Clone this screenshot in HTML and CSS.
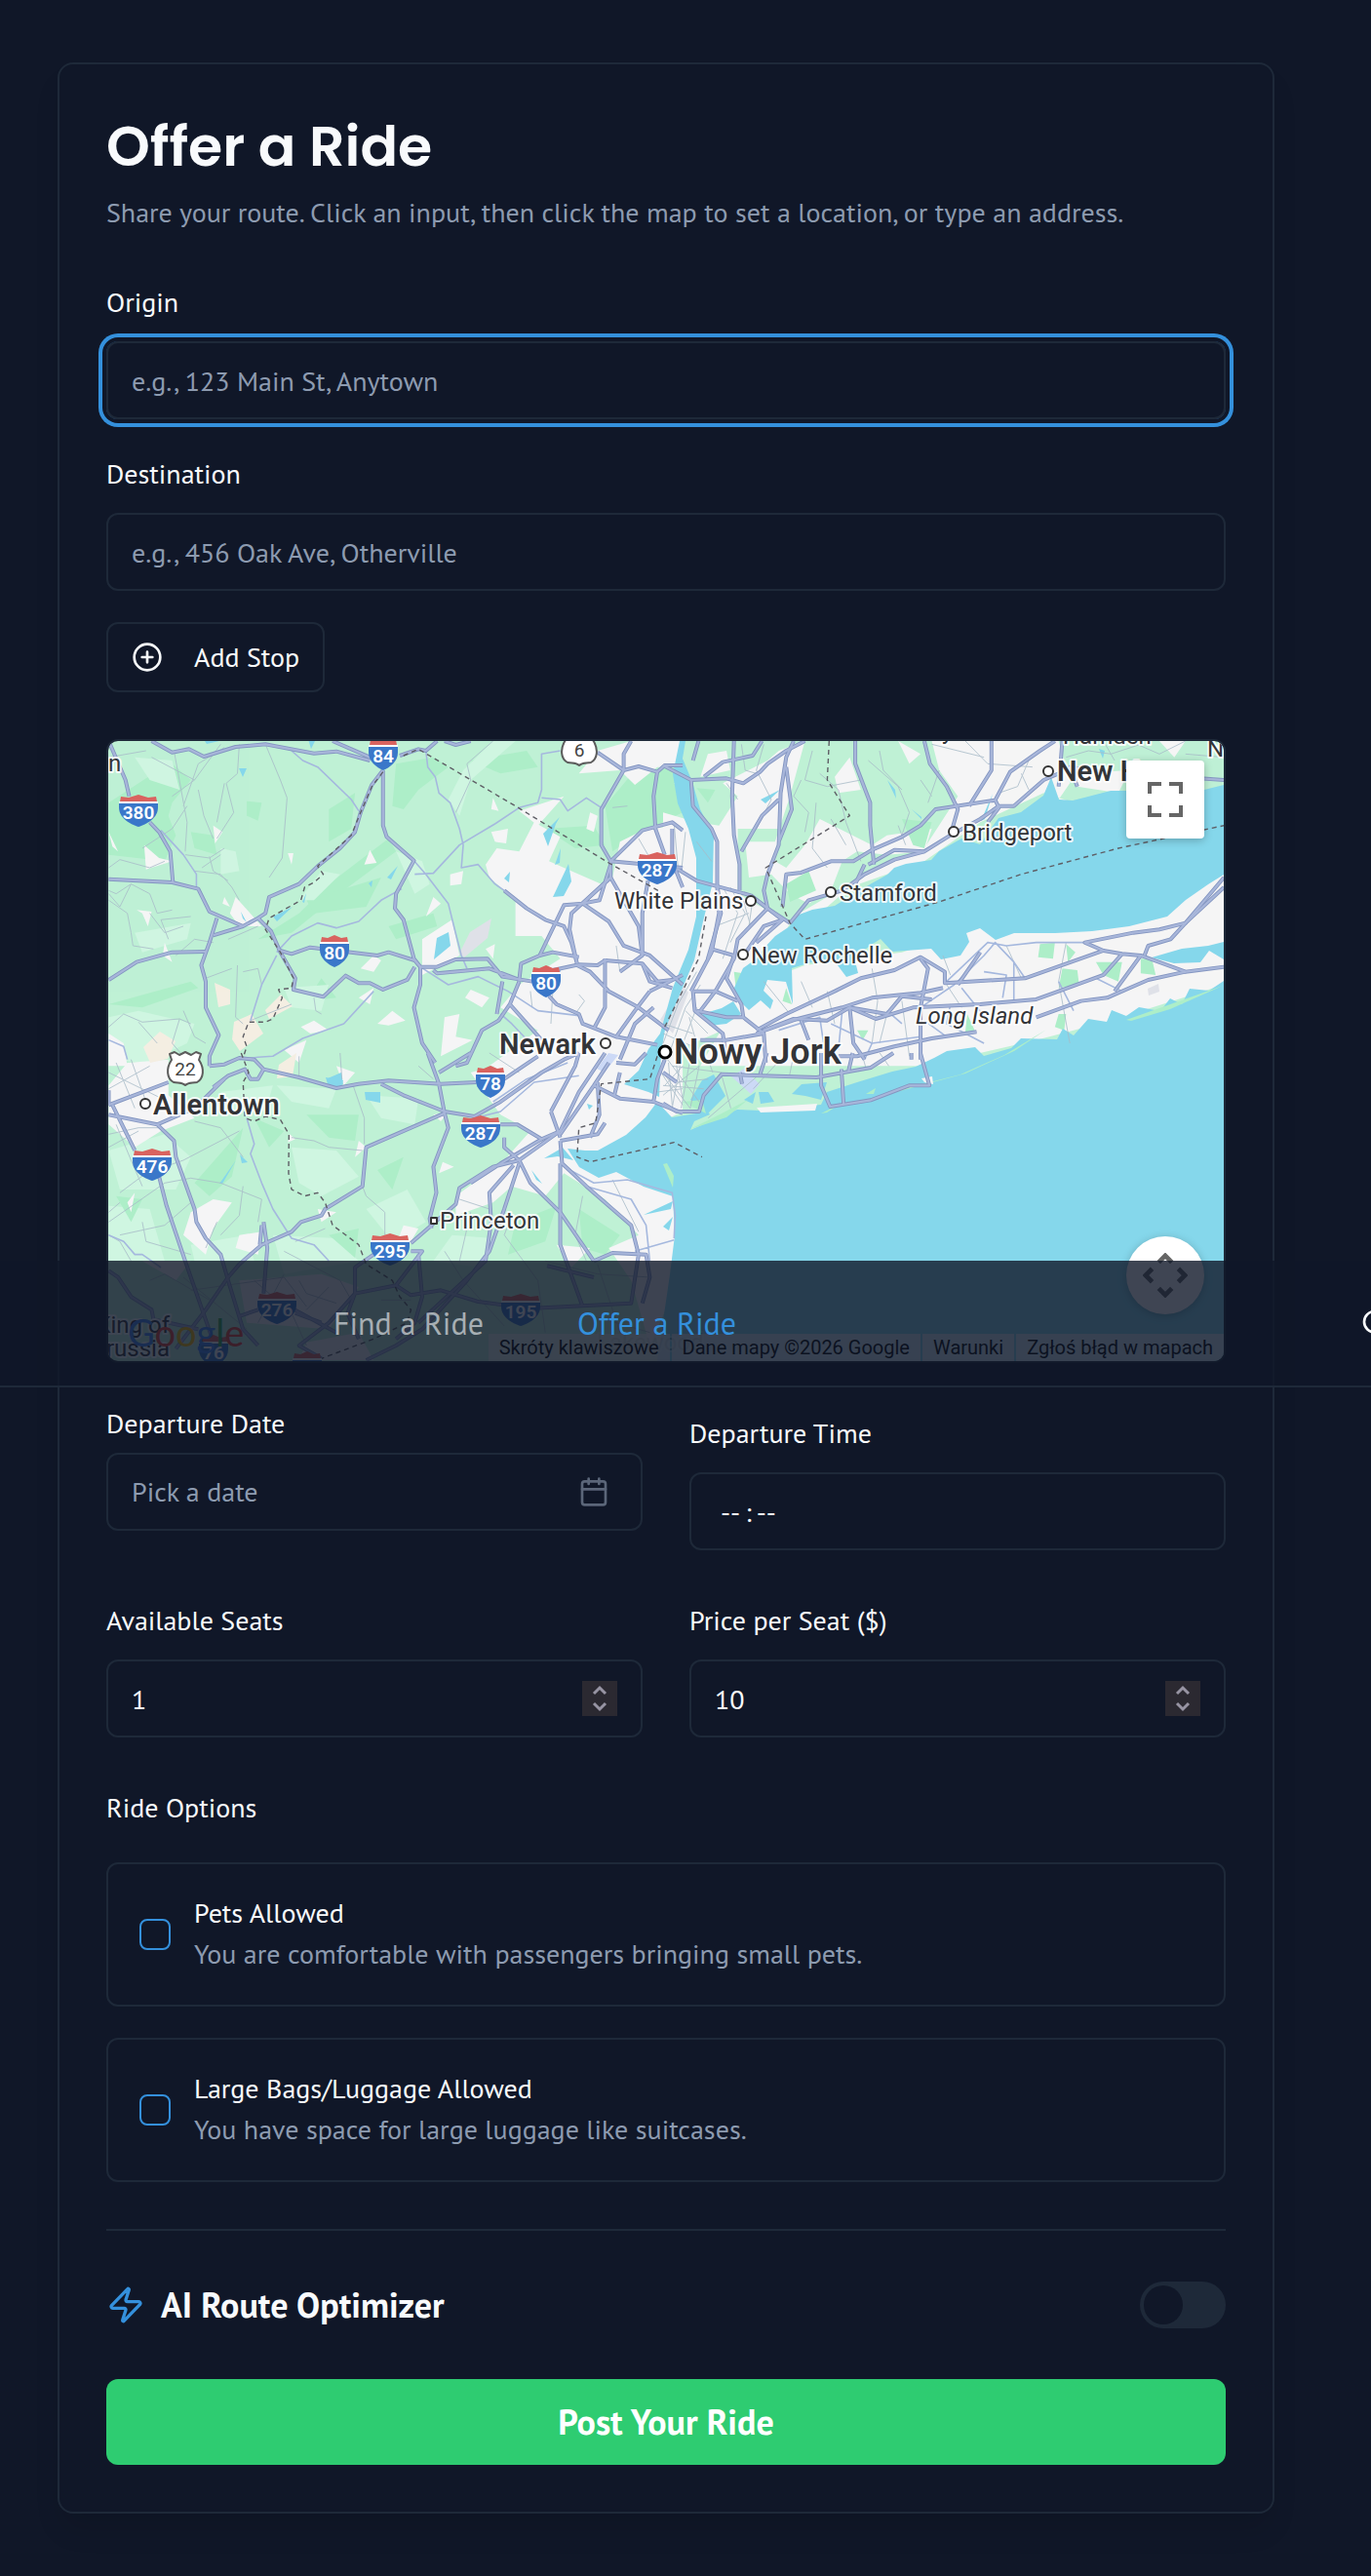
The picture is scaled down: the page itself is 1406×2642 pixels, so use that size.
FILE: index.html
```
<!DOCTYPE html>
<html lang="en">
<head>
    <meta charset="UTF-8">
    <meta name="viewport" content="width=device-width, initial-scale=1.0">
    <title>Offer a Ride</title>
    <link rel="stylesheet" href="styles.css">
</head>
<body>
    <nav class="navbar">
        <a class="nav-link" href="#find">Find a Ride</a>
        <a class="nav-link active" href="#offer">Offer a Ride</a>
        <button class="nav-search" type="button" aria-label="Search">
            <svg class="icon" viewBox="0 0 24 24"><circle cx="11" cy="11" r="8"/><path d="m21 21-4.3-4.3"/></svg>
        </button>
    </nav>

    <main class="page">
        <form class="card">
            <header class="card-header">
                <h1>Offer a Ride</h1>
                <p class="muted">Share your route. Click an input, then click the map to set a location, or type an address.</p>
            </header>

            <div class="field">
                <label for="origin">Origin</label>
                <input class="input selected" id="origin" type="text" placeholder="e.g., 123 Main St, Anytown">
            </div>
            <div class="field">
                <label for="destination">Destination</label>
                <input class="input" id="destination" type="text" placeholder="e.g., 456 Oak Ave, Otherville">
            </div>
            <button class="add-stop" type="button">
                <svg class="icon" viewBox="0 0 24 24"><circle cx="12" cy="12" r="10"/><path d="M8 12h8M12 8v8"/></svg>
                Add Stop
            </button>

            <div class="map">
                <svg class="map-canvas" viewBox="111 760 1144 636" preserveAspectRatio="xMidYMid slice">
                    <defs>
                        <g id="shield2">
                            <path class="shield-red" d="M-14-11 -13-16 -7-15 0-18 7-15 13-16 14-11z"/>
                            <path fill="#fff" d="M-15-11h30v3h-30z"/>
                            <path class="shield-blue" d="M-15-9h30v6C15 6 7 12 0 15-7 12-15 6-15-3z"/>
                        </g>
                        <g id="shield3">
                            <path class="shield-red" d="M-19-11 -18-16 -10-15 0-18 10-15 18-16 19-11z"/>
                            <path fill="#fff" d="M-20-11h40v3h-40z"/>
                            <path class="shield-blue" d="M-20-9h40v4C20 6 9 12 0 15-9 12-20 6-20-5z"/>
                        </g>
                        <path id="us-route" class="us-route" d="M-16-15 -11-17 -6-14 0-17 6-14 11-17 16-15 14-9C20 0 19 10 12 14 6 15 3 14 0 17-3 14-6 15-12 14-19 10-20 0-14-9z"/>
                        <!-- motorways: the same lines are stroked twice, casing and fill -->
                        <g id="roads">
                            <g transform="translate(100 750) scale(.3827 .3333)">
                                <path d="M145 30 200 65 245 55 285 78 370 48 450 40 580 68 640 62 730 90M630 30 730 80M810 75 860 55 880 60 910 30M930 30 960 42 1000 30"/>
                                <path d="M765 120 735 165 705 250 690 310 650 360 590 415 540 470 460 510 450 560 430 575 390 600 300 555 270 485 200 465 30 455"/>
                                <path d="M765 120V290L775 325 848 398 800 500 797 545 820 580 848 700 865 725V780L848 850 870 960 905 1020"/>
                                <path d="M140 280 165 310 195 370 202 465M30 30 75 150 85 200M320 575 300 650 278 720 290 770V850L325 935 300 1000V1030"/>
                                <path d="M30 765 105 710 200 680 290 678M310 628 390 600M430 575 465 615 490 680 530 760 525 795 605 817 665 752 700 775 730 775 765 795 830 765 850 725"/>
                                <path d="M490 675 520 685 570 665 750 690 780 680 850 705 865 725 910 725 960 702 1045 700 1085 755 1165 770M900 735 910 745 1050 730 1130 765M1220 735 1290 718 1340 720 1360 705 1460 715 1500 770 1540 765"/>
                                <path d="M1130 765 1135 715 1185 690 1250 535 1300 530 1375 450 1375 400 1350 350V240L1410 120V70L1430 30M1375 400 1568 420M1375 400 1460 305 1540 280 1568 305M1340 65 1410 120 1450 108 1500 125 1490 200 1495 300 1520 380M1500 125 1520 105 1568 105"/>
                                <path d="M1300 530 1370 585 1410 660 1480 690 1568 780M1375 450 1450 600 1460 690 1400 740M1375 410 1345 520 1300 530M1090 490 1150 545 1200 580 1250 600 1270 650 1285 715M1375 450 1270 560 1265 610 1285 715M1185 690 1220 680 1290 695"/>
                                <path d="M1130 770 1105 840 1190 950M1105 840 1075 890 1030 920 990 1020 960 1030M1085 770 1070 870M1210 815 1230 840 1290 870 1300 900 1390 940 1440 860 1480 800M1285 720 1320 740 1370 800 1450 850 1530 920M1360 700 1360 850 1330 915"/>
                                <path d="M1460 715 1480 770 1540 790M1390 940 1500 965M1400 1010 1440 900 1490 850M1540 300V400L1568 480M1475 460 1460 560V690M1480 800 1568 750"/>
                            </g>
                            <g transform="translate(680 750) scale(.3827 .3333)">
                                <path d="M0 105 75 150 170 145 215 160 260 125 280 100 330 60 380 30M75 150 80 230 130 300 145 340V470L155 560 120 700M190 30 185 200 190 320 205 410V490M110 140 160 95 240 75 265 30M95 30 80 90"/>
                                <path d="M350 30 330 80 315 190 310 350 280 440 270 490 280 545 340 590M515 30 515 100 555 220V290L565 410M330 110 345 240 310 340M310 210 265 260 210 370"/>
                                <path d="M340 590 390 520 480 490 540 440 620 395 700 370 770 320 850 270 900 230 940 230 1020 150 1060 130M320 540 330 440 370 435 450 400 510 400 560 365 640 325 690 290 730 240 890 212 930 125 1010 60 1050 30"/>
                                <path d="M700 30 715 100 760 170 790 240 770 320M880 30V120L820 230M890 212 900 235 870 280M0 425 40 425 90 460 235 505 320 580 250 650M550 410 620 365 700 370M540 410 515 470"/>
                                <path d="M235 505 280 545 200 640 190 700 140 800 100 860M320 580 270 600 210 700M1070 30 1060 170M1110 170 1090 110 1200 130M1440 145 1503 150M145 480 150 560 130 680 75 800"/>
                                <path d="M250 920 330 870 460 800 530 760 620 735 690 695 755 740V775L970 760 1180 675 1130 650 1260 620 1330 610 1400 590 1503 450M250 930 360 885 480 850 560 820 690 805 750 790"/>
                                <path d="M270 920 350 885 440 890 500 850 570 885 670 850 850 840 1000 825 1180 750 1230 685 1280 690 1400 740 1503 725M1180 675 1230 685M1290 690 1300 660 1360 640 1400 590 1503 480M1280 690 1210 800"/>
                                <path d="M100 950 170 950 270 930 M470 1000 520 1000 620 970 720 945 840 925 M1000 880 1120 830 1190 820 1300 765 1400 740M500 850 510 960 540 1010M690 700 710 730 690 850 690 1010M370 890 390 950M850 680 790 780M500 850 600 870 640 815 720 825"/>
                                <path d="M130 670 190 690 170 760 210 840 215 880 270 930 275 1020M80 800 140 800 200 830M90 860 170 880 215 880M80 800 85 860 160 930 170 1010"/>
                            </g>
                            <g transform="translate(100 1080) scale(.3827 .3333)">
                                <path d="M30 160 190 90M30 190 160 220 205 270 210 320 260 480 265 520 290 570 330 620 350 700 390 850 430 900M40 160 100 300M165 380 185 470 235 640 320 920M160 220 260 170 340 80"/>
                                <path d="M300 40 340 35 380 15 420 20 445 50 430 80 410 80 395 50 350 70 310 105M445 50 540 75 640 108 700 95 780 85 920 95 1015 90M885 0 915 95 930 185 940 230 900 350 908 430 890 510 895 540M760 95 820 130 930 180 1010 195 1080 150 1190 60 1250 20 1290 0"/>
                                <path d="M915 60 1000 0M930 185 720 290 710 410 610 480 600 500 545 520 520 550 440 590 380 650 350 690 290 790 210 910M445 520 455 600 445 740M440 530 435 590M1090 80 1180 10M1080 220 1125 220 1190 265 1240 240 1290 120 1360 0"/>
                                <path d="M1240 240 1130 330 1060 350 970 415 960 465 840 585M1190 265 1080 340 1000 400M1130 330 1160 400 1240 490 1330 640M1130 340 1090 480 1050 610 990 700 870 850 800 900 720 945M1115 345 1050 430 1055 520 1040 640 860 830"/>
                                <path d="M1240 270 1245 340 1310 410 1430 530 1450 620 1430 770 1090 790M1085 775 1020 765 920 730 840 745 800 715M1240 340V590L1300 780M1330 640 1380 615 1470 620 1480 690 1460 770"/>
                                <path d="M840 610H870L800 715 690 740 620 830 540 900 600 940M860 620 870 750 850 830 800 880M690 740V660L740 620M480 760 560 810 640 860M690 740 670 800 700 880M530 800 600 830"/>
                                <path d="M1330 100 1400 140 1490 150 1568 185M1490 150 1500 80 1520 20M1215 180 1280 40 1290 0M1215 180 1240 260M1340 90 1345 190 1320 260M1240 270 1340 250 1360 215M1370 30 1330 100 1240 250M1090 260 1090 290 1130 330M1205 655 1330 690"/>
                                <path d="M30 670 55 690 90 750 145 790 150 820 270 850M30 160V115M380 810 430 790M1390 30 1440 35 1470 0M1385 130 1400 60"/>
                            </g>
                            <g transform="translate(680 1080) scale(.463 .3333)">
                                <path d="M0 155 30 180 80 180 90 130 130 65 220 70 340 75 460 45 510 0M350 0V100L370 165 460 145 545 100 590 100 570 0M400 160 395 50M410 60 420 0M170 60 175 95M0 60 30 90M215 65 230 0M550 0 550 20"/>
                            </g>
                        </g>
                    </defs>

                    <rect x="111" y="760" width="1144" height="636" fill="#bff1d5"/>

                    <g fill="#adeec8" transform="translate(100 750) scale(.3827 .3333)">
                        <path d="M30 220 150 130 200 100 250 150 200 220 190 260 210 320 180 400 30 380zM800 100 900 80 940 110 860 180 820 240 790 230zM620 240 690 190 680 300 620 340zM620 470 700 400 780 330 800 370 660 490 520 620 430 640 540 560zM1000 90 1150 60 1180 110 1080 130zM400 215 440 220 430 275 400 260z"/>
                        <path d="M1360 230 1440 120 1568 110V250L1460 310 1380 370zM1200 300 1330 290 1360 350 1280 360zM780 600 900 560 910 600 800 640zM560 520 760 450 720 540 580 560zM250 310 310 320 320 380 260 360zM30 840 250 770 270 790 120 850zM600 760 640 820 560 830z"/>
                    </g>
                    <g fill="#cff6e1" transform="translate(100 750) scale(.3827 .3333)">
                        <path d="M940 210 980 120 1060 30 1120 30 1000 150 970 260zM800 370 870 400 890 470 850 500zM100 80 200 90 220 180 140 150zM30 880 110 860 260 900 240 960 130 1020 30 1010zM330 360 370 370 380 430 330 440zM600 430 650 440 580 520 540 520zM100 620 250 590 240 640 120 680zM500 790 620 780 600 860 520 850z"/>
                    </g>
                    <g fill="#cff6e1" transform="translate(100 1080) scale(.3827 .3333)">
                        <path d="M30 300 180 250 250 320 210 420 60 420zM330 120 470 100 450 180 350 170zM520 290 640 300 700 380 600 440 540 400zM720 130 860 140 850 220 760 200zM480 100 640 110 620 170 520 150zM30 470 140 480 180 640H30zM250 590 400 560 420 640H260zM470 560 640 570 700 640 500 680zM720 480 830 420 880 520 790 580zM950 560 1060 570 1030 660 900 640z"/>
                    </g>
                    <g fill="#adeec8" transform="translate(100 1080) scale(.3827 .3333)">
                        <path d="M260 400 390 230 360 380 300 440zM560 190 700 190 690 270 620 260zM420 200 500 240 460 290zM750 360 820 320 790 420zM980 430 1090 380 1020 470zM1120 520 1230 470 1200 580 1100 620zM1290 480 1400 560 1360 620 1300 600zM620 560 700 540 690 630zM50 440 120 450 90 520z"/>
                    </g>

                    <g fill="#f5f5f6" transform="translate(100 750) scale(.3827 .3333)">
                        <path d="M1040 410 1070 360 1130 370 1170 280 1240 325 1210 400 1250 420 1350 470 1380 450 1400 340 1470 300 1568 290V1030H1050L1180 920 1080 850 1130 780 1240 700 1190 630H1120V520L1050 450z"/>
                        <path d="M1340 60 1430 30H1568V110H1500L1440 165 1400 120 1290 130zM30 310 55 370 40 355zM125 350 165 390 200 400 130 425zM310 290 335 310 315 345zM510 375 525 375 520 410zM715 410 730 365 748 405zM900 510 920 530 880 570zM1060 205 1075 245 1055 240zM1055 310 1100 300 1095 345 1065 340z"/>
                        <path d="M945 440 980 430 975 470 945 475zM370 510 440 600 380 600 355 560zM105 550 145 555 135 600 120 560zM180 650 200 710 175 690zM740 690 760 705 740 740 705 730zM985 820 1000 795 1050 820 1030 850zM750 900 790 860 825 890 780 905zM545 910 580 890 620 920 570 930zM870 640 950 580 970 690 870 750zM1040 670 1065 655 1060 700zM930 880 970 870 960 940 1005 950 920 1000zM700 820 740 790 730 840z"/>
                        <path d="M1130 245 1250 200 1180 290zM1320 250 1340 260 1330 310 1310 300zM340 510 355 540 335 530zM500 980 560 950 540 1020zM30 930 70 960 80 1030H30z"/>
                    </g>
                    <g fill="#f5f5f6" transform="translate(680 750) scale(.3827 .3333)">
                        <path d="M0 250 90 280 150 290 200 200 160 160 280 90 310 60 380 30 340 200 300 340 220 340 230 450 290 440 340 500 390 530 450 490 480 400 520 370 600 380 700 370 720 300 600 320 560 350 420 270 380 350 330 420 300 400 310 300 200 300V500L340 590 200 900 0 1000z"/>
                        <path d="M720 30H1060L1090 160 1060 210 1100 220 1020 190 850 280 700 400 500 480 420 560 350 570 560 430 700 360 790 200 740 120zM500 80 530 180 470 190 460 140zM630 30 690 70 660 100zM1110 130 1250 120 1220 190 1110 170zM1330 30 1400 30 1370 80zM30 160 70 150 50 210zM120 70 170 60 180 120 100 140z"/>
                        <path d="M100 1030 220 790 380 720 640 680 860 600 1250 590 1503 430V780L1200 890 1000 950 700 1030z"/>
                    </g>
                    <g fill="#f5f5f6" transform="translate(100 1080) scale(.3827 .3333)">
                        <path d="M1000 60 1190 0H1568V180L1350 300 1560 430V690L1480 900 1430 700 1370 600 1450 560 1360 450 1250 370 1200 440 1110 410 1060 460 960 500 960 440 1090 330 1160 240 1080 190z"/>
                        <path d="M30 100 80 30 190 20 190 130 260 200 170 240 100 290 30 220zM250 490 310 450 360 460 310 540 290 620 230 560zM100 430 90 490 80 460zM380 560 440 550 430 620 370 600zM640 40 690 60 660 100zM700 270 720 290 690 320zM515 250 530 265 510 275zM590 480 640 490 600 520zM925 335 955 350 915 370zM820 530 860 540 830 600 800 590zM120 640 250 640 210 700zM380 700 600 680 700 720 620 850 400 830zM560 890 700 860 740 945H540z"/>
                        <path d="M1230 590 1320 600 1270 660zM900 190 940 180 920 210z"/>
                    </g>
                    <g fill="#adeec8" transform="translate(680 750) scale(.3827 .3333)">
                        <path d="M1010 655 1050 650 1045 700 1005 695zM1080 655 1105 680 1085 710zM1070 730 1110 735 1115 780 1060 790zM1160 710 1230 710 1220 770 1180 750zM1280 700 1310 700 1320 750 1280 745zM330 470 390 430 410 490 340 525zM1060 870 1080 870 1075 920 1050 910zM520 920 550 920 535 950zM815 870 835 920 810 925zM190 740 215 745 195 790zM640 270 720 280 700 360 670 350zM330 790 345 840 320 830zM90 175 140 180 120 220z"/>
                    </g>
                    <g fill="#f4eee2">
                        <path d="M220 1008 236 1015 236 1030 224 1033zM240 1048 258 1040 270 1060 246 1078 238 1066zM272 1036 288 1020 300 1032 276 1045zM147 1074 164 1058 180 1068 172 1086 154 1090zM286 1092 304 1080 300 1104 284 1106z"/>
                    </g>
                    <path fill="#dfe1e8" d="M471 978 482 956 504 942 500 962 476 982zM677 1046 699 1010 706 1018 690 1060zM1177 1014 1188 1009 1189 1017 1178 1021z"/>
                    <path fill="#ccd9f6" d="M750 1104 763 1096 779 1112 770 1122zM612 1096 624 1080 634 1082 620 1100z"/>

                    <g fill="#85d7eb">
                        <!-- Long Island Sound -->
                        <path d="M1255 805 1231 811 1215 808 1193 816 1180 811 1139 811 1112 818 1100 821 1086 820 1078 797 1070 816 1047 833 1024 839 1005 866 986 860 963 873 955 882 929 886 917 890 910 897 894 906 880 914 856 929 833 933 814 940 810 950 795 960 783 973 776 983 762 993 753 1013 754 1022 768 1036 780 1026 790 1035 793 1026 783 1016 787 1005 806 1007 813 1030 812 993 832 987 845 988 856 986 868 1002 880 998 876 982 895 968 903 963 915 976 955 973 965 984 985 980 994 966 991 957 1005 952 1021 964 1040 957 1082 957 1120 955 1158 950 1197 940 1216 923 1239 907 1255 897z"/>
                        <path d="M1255 966 1239 970 1212 973 1181 982 1204 988 1231 987 1240 975 1255 984z"/>
                        <!-- Atlantic and the Lower Bay -->
                        <path d="M1255 1006 1240 1016 1220 1014 1212 1030 1200 1024 1190 1037 1168 1033 1155 1042 1140 1036 1135 1048 1116 1045 1101 1062 1090 1055 1084 1066 1047 1065 1037 1075 1009 1083 1000 1074 971 1078 958 1085 939 1094 915 1099 879 1110 848 1120 842 1133 779 1139 756 1138 708 1159 712 1150 728 1143 719 1132 714 1142 689 1146 674 1130 662 1146 642 1164 613 1180 600 1180 582 1178 594 1197 614 1208 632 1202 660 1217 690 1227 692 1267 687 1307 674 1396H1255z"/>
                        <!-- Hudson and the harbour -->
                        <path d="M697 760H703L700 778 710 802 718 830 732 857 731 905 721 945 712 985 700 1013 682 1056 678 1080 676 1125 665 1120 640 1112 655 1098 665 1076 677 1060 690 1013 706 974 714 940 714 880 706 850 695 824 690 794z"/>
                        <path d="M720 1040 740 1034 752 1027 760 1040 745 1050 728 1052zM708 1128 720 1108 732 1102 744 1124 726 1142zM763 1128 775 1120 772 1132zM812 1122 822 1112 848 1110 842 1128 826 1124zM778 1120 788 1120 794 1130 780 1132z"/>
                        <path d="M245 788 253 788 249 797zM210 760H225L212 763zM316 758H324L319 768zM557 855 574 838 570 845 562 868zM569 887 575 870 574 885zM567 920 583 886 586 904 578 919zM517 901 523 894 522 905zM378 906 382 903 381 910zM448 962 460 956 462 970 445 984zM397 900 408 888 401 902zM310 925 314 916 312 926zM334 1105 352 1108 350 1116 336 1112zM336 1106 350 1100 352 1112zM374 1120 390 1120 390 1131 375 1128zM246 1184 254 1192 248 1193zM225 1214 242 1190 228 1214zM558 1188 577 1177 588 1190 572 1186zM602 1132 608 1134 604 1138zM545 1200 556 1214 550 1210zM660 1246 690 1232 688 1240zM680 1258 690 1248 686 1262zM247 935 253 946 249 942zM280 940 300 930 284 945zM910 800 918 810 919 819zM935 830 945 840 945 838zM1127 768 1133 770 1131 778zM780 820 800 810 785 824zM1006 842 1018 814 1010 840z"/>
                    </g>
                    <path fill="#adeec8" d="M910 1121 985 1102 1030 1082 1073 1056 1040 1078 990 1101 912 1122zM1155 1046 1254 1011 1200 1035 1160 1047zM708 1158 740 1142 767 1128 745 1146zM842 1142 862 1132 848 1141zM680 1194 684 1193 691 1206 690 1218zM700 1130 720 1128 724 1142zM888 1122 898 1116 896 1122z"/>
                    <path fill="#f5f5f6" d="M776 1136 838 1132 836 1139 780 1141zM945 1106 956 1104 957 1112 948 1110z"/>

                    <!-- local streets -->
                    <g class="streets" transform="translate(100 750) scale(.3827 .3333)">
                        <path d="M145 80 260 150 330 40M205 60 240 280 235 370M230 230 270 100 340 50M380 40 375 130 345 160 365 250 320 330M450 40 490 150 508 205 495 390 460 450M30 80 130 60M200 200 260 150M270 180 285 260 310 330M340 160 320 280M120 360 200 300 240 230M30 420 60 395 140 420 180 400M235 380 300 390 340 360M260 430 330 440 360 480 380 520M300 385 310 430 350 460M280 420 330 380M30 490 50 500 90 470 140 500 160 560 200 550M90 470 60 540 30 500M140 560 180 620 230 600M90 620 80 560 30 520M90 620 95 660 150 670M190 640 170 580 250 570M310 650 260 640 210 690M350 640 430 600M30 910 70 870 120 895 220 885 250 900M220 885 200 960 230 1000M110 895 160 960M230 860 260 940 290 960M375 720 370 880 390 900M390 740 430 730 440 780M360 730 290 760"/>
                        <path d="M410 890 520 840M1060 30 990 100 1000 150 960 250M1380 235 1420 230M580 820 585 860 600 870M1290 810 1305 830 1280 870M1390 660 1400 740M1450 330 1480 390 1450 400M1220 800 1215 900M1160 800 1165 850"/>
                    </g>
                    <g class="streets" transform="translate(680 750) scale(.3827 .3333)">
                        <path d="M270 40 250 120 290 210 250 300M370 150 350 200 390 250 380 310M400 60 380 150 440 170 530 150M420 130 470 180 490 280 530 400M550 90 630 170 660 250 640 320M580 60 590 120 640 180M720 40 860 80M810 30 870 100 990 110M960 130 980 180M1080 80 1140 60 1200 70 1280 40M1180 30 1210 90M1270 40 1330 70 1400 30M1400 70 1503 80M630 290 650 350M740 120 710 220M410 220 400 360 440 420M450 270 490 350M980 90 950 170 900 190M690 150 720 200M170 160 200 210M210 40 220 120 250 130M60 310 50 420M30 290 40 420M90 340 130 400"/>
                        <path d="M160 480 200 560 160 700M180 480 220 560 180 650M140 600 230 560M210 500 235 600M240 520 230 600M0 960 40 840 90 740M20 980 60 850 100 780M40 1000 90 850M60 860 120 930M0 900 80 930M0 930 80 970M70 880 100 1000M270 770 340 870M370 770 400 850M560 730 575 830 560 960M440 800 460 900M600 870 580 960M640 830 660 1000M760 780 800 850M920 660 960 760M1080 650 1060 770 1090 960M750 690 770 750"/>
                    </g>
                    <g class="streets" transform="translate(100 1080) scale(.3827 .3333)">
                        <path d="M30 60 190 150M50 30 100 170M90 20 130 150M30 110 140 40M30 250 110 230 170 230M50 220 90 330 120 410M110 240 30 290M30 520 180 400 250 385 330 400 440 450M60 430 130 370 230 330 380 240M260 210 330 230 390 320M250 460 180 530 60 560M60 460 30 490M120 520 130 580 250 620M320 520 290 600M390 410 380 500 330 560M440 450 430 520M610 540 530 580M30 560 60 580 90 640M520 260 580 270 620 290 710 300M685 100 715 200 715 280M710 410 720 440 770 490 770 560M540 70 540 10M650 0 655 80M970 450 1050 480M1300 440 1280 560 1310 640M1000 490 970 640M1380 390 1450 550M230 690 400 850M250 730 500 690 560 780M140 700 180 680 300 760M500 680 430 830M500 610 650 700 680 760M1200 640 1340 680 1480 690M1110 500 1090 560 1180 700 1200 860M930 610 980 700 1090 840M420 700 520 800 560 900M620 720 560 790M760 760 840 760M1300 800 1480 860M1340 650 1400 860M860 40 900 80M1050 0 1130 60M540 700 560 740 640 770"/>
                        <path d="M1520 100 1568 40M1510 60 1568 160M1530 30 1540 160M1500 120 1568 110M1550 30 1568 140"/>
                    </g>
                    <g class="streets" transform="translate(680 1080) scale(.463 .3333)">
                        <path d="M0 60 60 170M10 20 80 150M30 90 100 80M40 20 20 170M60 20 40 170M80 40 60 170M0 100 90 110M0 130 80 40M100 20 110 60M130 70 150 170M210 70 100 200M20 40 130 60M260 20 200 110M290 0 280 70M440 0 450 50M480 0 500 40"/>
                    </g>
                    <g class="highways" transform="translate(100 750) scale(.3827 .3333)">
                        <path d="M520 60 550 90 590 110 680 210 700 245M880 60 885 110 905 140 915 190 945 220 970 300 980 350 975 420 1020 410 1065 470 1090 490M850 440 900 437 970 350 1065 285 1130 235 1180 220 1190 180V70L1240 60M848 398 880 440 940 530 955 600 975 690 990 730M480 680 520 630 590 590 640 605 700 585 760 520 815 485M170 305 230 380 265 440V480M480 690 440 780 410 890M380 1010 430 1003 470 1000 550 945 660 900 740 800M1190 205 1240 210 1260 245 1310 205 1350 235M865 725 940 780 1020 755 1100 800 1180 860 1290 875M1080 870 1110 900 1160 960M30 950 70 970 80 1010M1240 730 1230 790"/>
                    </g>
                    <g class="highways" transform="translate(680 750) scale(.3827 .3333)">
                        <path d="M755 775 870 650 920 660 1000 650 1130 650M690 850 780 780 860 690 890 650 940 710 970 760M940 710 940 830M800 790 870 890M860 740 920 750 910 820M770 840 760 900 860 960M1060 770 1100 860M1160 760 1230 800M310 920 420 880 430 960M450 900 560 960 690 940M600 860 640 900M480 860 470 980M560 960 540 1010M700 890 760 940"/>
                    </g>
                    <g class="highways" transform="translate(100 1080) scale(.3827 .3333)">
                        <path d="M400 200 420 280 410 310 440 400 470 480 520 570 580 590 620 640M1010 200 1080 180 1170 90 1290 70M1250 350 1330 400 1420 390 1540 430 1548 500 1545 570M1310 410 1430 450 1470 530 1480 640M1545 575 1440 610M1060 150 1150 80 1260 30M30 560 70 580 100 620 120 620 170 660"/>
                    </g>

                    <use href="#roads" class="road-casing"/>
                    <use href="#roads" class="road-fill"/>

                    <!-- state lines -->
                    <g class="borders">
                        <path transform="translate(100 750) scale(.3827 .3333)" d="M820 75 860 55 1120 230 1370 405 1510 495M765 125 735 170 705 250 680 320 590 415 605 440 580 465 555 480 545 520 460 575 450 610 490 680 525 760 520 790 485 795 495 820 470 885 450 895 405 895 390 940 400 970 390 1005"/>
                        <path transform="translate(680 750) scale(.3827 .3333)" d="M445 30 440 150 500 260 275 420 340 590 380 640 740 525 960 440 1220 360 1503 290M115 570 95 700 0 920"/>
                        <path transform="translate(100 1080) scale(.3827 .3333)" d="M385 0 405 60 390 90 395 200 420 210 450 195 490 205 513 250 512 370 520 420 555 440 590 430 610 460 630 530 700 590 720 650 790 700 810 750 840 790 830 830 740 880 600 940M1500 10 1480 80 1350 95 1335 215 1290 230 1285 320 1320 335 1545 275 1620 320"/>
                    </g>

                    <g class="places">
                        <text x="111" y="791" class="big">n</text>
                        <text x="630" y="932">White Plains</text>
                        <text x="861" y="924">Stamford</text>
                        <text x="770" y="988">New Rochelle</text>
                        <text x="987" y="862">Bridgeport</text>
                        <text x="1090" y="763">Hamden</text>
                        <text x="966" y="758">y</text>
                        <text x="1238" y="776">N</text>
                        <text x="451" y="1260">Princeton</text>
                        <text x="174" y="1367" text-anchor="end">King of</text>
                        <text x="174" y="1391" text-anchor="end">Prussia</text>
                        <text x="612" y="1385" opacity=".3">Lakewood</text>
                        <text x="939" y="1050" font-style="italic">Long Island</text>
                        <text x="1084" y="801" class="city">New Haven</text>
                        <text x="512" y="1081" class="city">Newark</text>
                        <text x="157" y="1143" class="city">Allentown</text>
                        <text x="691" y="1091" class="metro">Nowy Jork</text>
                    </g>
                    <g class="dots">
                        <circle cx="770" cy="924" r="5"/><circle cx="852" cy="915" r="5"/><circle cx="762" cy="979" r="5"/>
                        <circle cx="978" cy="853" r="5"/><circle cx="1075" cy="791" r="5"/><circle cx="621" cy="1070" r="5"/>
                        <circle cx="149" cy="1132" r="5"/><circle cx="682" cy="1079" r="6" stroke="#000" stroke-width="3"/>
                        <rect x="442" y="1249" width="6" height="6"/>
                    </g>
                    <g class="route-numbers">
                        <g transform="translate(393 775)"><use href="#shield2"/><text y="7">84</text></g>
                        <g transform="translate(142 833)"><use href="#shield3"/><text y="7">380</text></g>
                        <g transform="translate(343 977)"><use href="#shield2"/><text y="7">80</text></g>
                        <g transform="translate(560 1008)"><use href="#shield2"/><text y="7">80</text></g>
                        <g transform="translate(674 892)"><use href="#shield3"/><text y="7">287</text></g>
                        <g transform="translate(503 1111)"><use href="#shield2"/><text y="7">78</text></g>
                        <g transform="translate(493 1162)"><use href="#shield3"/><text y="7">287</text></g>
                        <g transform="translate(156 1196)"><use href="#shield3"/><text y="7">476</text></g>
                        <g transform="translate(400 1283)"><use href="#shield3"/><text y="7">295</text></g>
                        <g transform="translate(284 1343)"><use href="#shield3"/><text y="7">276</text></g>
                        <g transform="translate(534 1345)"><use href="#shield3"/><text y="7">195</text></g>
                        <g transform="translate(219 1387)"><use href="#shield2"/><text y="7">76</text></g>
                        <use href="#shield2" x="315" y="1404"/>
                        <g transform="translate(190 1096)"><use href="#us-route"/><text y="7" class="us">22</text></g>
                        <g transform="translate(594 768)"><use href="#us-route"/><text y="8" class="us">6</text></g>
                    </g>
                </svg>
                <button class="map-fullscreen" type="button" aria-label="Toggle fullscreen">
                    <svg viewBox="0 0 36 36"><path d="M0 0h14v4H4v8H0zM22 0h14v12h-4V4H22zM0 24h4v8h10v4H0zM32 24h4v12H22v-4h10z"/></svg>
                </button>
                <button class="map-pan" type="button" aria-label="Map camera controls">
                    <svg viewBox="0 0 48 48"><path d="m17 10 7-7 7 7M17 38l7 7 7-7M10 17l-7 7 7 7M38 17l7 7-7 7"/></svg>
                </button>
                <div class="google-logo"><span class="g-blue">G</span><span class="g-red">o</span><span class="g-yellow">o</span><span class="g-blue">g</span><span class="g-green">l</span><span class="g-red">e</span></div>
                <div class="map-credits">
                    <button type="button">Skróty klawiszowe</button>
                    <span>Dane mapy ©2026 Google</span>
                    <a href="#terms">Warunki</a>
                    <a href="#report">Zgłoś błąd w mapach</a>
                </div>
            </div>

            <div class="row">
                <div class="field-date">
                    <label for="date">Departure Date</label>
                    <button class="input date-button" id="date" type="button">
                        Pick a date
                        <svg class="icon" viewBox="0 0 24 24"><rect x="3" y="4" width="18" height="18" rx="2"/><path d="M8 2v4M16 2v4M3 10h18"/></svg>
                    </button>
                </div>
                <div class="field">
                    <label for="time">Departure Time</label>
                    <input class="input time" id="time" type="text" value="-- : --">
                </div>
            </div>

            <div class="row row-numbers">
                <div class="field">
                    <label for="seats">Available Seats</label>
                    <div class="number">
                        <input class="input" id="seats" type="number" value="1">
                        <svg class="spinner" viewBox="0 0 36 36"><path d="m12 13 6-6 6 6M12 23l6 6 6-6"/></svg>
                    </div>
                </div>
                <div class="field">
                    <label for="price">Price per Seat ($)</label>
                    <div class="number">
                        <input class="input" id="price" type="number" value="10">
                        <svg class="spinner" viewBox="0 0 36 36"><path d="m12 13 6-6 6 6M12 23l6 6 6-6"/></svg>
                    </div>
                </div>
            </div>

            <fieldset class="options">
                <legend>Ride Options</legend>
                <div class="option">
                    <input type="checkbox" id="pets">
                    <div>
                        <label for="pets">Pets Allowed</label>
                        <p class="muted">You are comfortable with passengers bringing small pets.</p>
                    </div>
                </div>
                <div class="option">
                    <input type="checkbox" id="bags">
                    <div>
                        <label for="bags">Large Bags/Luggage Allowed</label>
                        <p class="muted">You have space for large luggage like suitcases.</p>
                    </div>
                </div>
            </fieldset>

            <div class="optimizer">
                <svg class="icon bolt" viewBox="0 0 24 24"><path d="M4 14a1 1 0 0 1-.78-1.63l9.9-10.2a.5.5 0 0 1 .86.46l-1.92 6.02A1 1 0 0 0 13 10h7a1 1 0 0 1 .78 1.63l-9.9 10.2a.5.5 0 0 1-.86-.46l1.92-6.02A1 1 0 0 0 11 14z"/></svg>
                <label for="optimizer">AI Route Optimizer</label>
                <input class="switch" type="checkbox" id="optimizer">
            </div>

            <button class="submit" type="submit">Post Your Ride</button>
        </form>
    </main>
</body>
</html>
```

FILE: styles.css
```
:root {
    --bg: #101728;
    --border: #1e2939;
    --text: #f8fafc;
    --muted: #8d9bb0;
    --blue: #3490dc;
    --green: #2ecc71;
}
* {
    box-sizing: border-box;
}
body {
    position: relative;
    margin: 0;
    overflow-x: hidden;
    background-color: var(--bg);
    color: var(--text);
    font-family: "PT Sans", Lato, "Open Sans", sans-serif;
    font-size: 28px;
    line-height: 40px;
}
button, input {
    font: inherit;
    color: inherit;
}
h1, p {
    margin: 0;
}
.muted {
    color: var(--muted);
}
.icon {
    width: 32px;
    height: 32px;
    flex-shrink: 0;
    fill: none;
    stroke: currentColor;
    stroke-width: 2;
    stroke-linecap: round;
    stroke-linejoin: round;
}

/* top bar, floats over the page */
.navbar {
    position: absolute;
    top: 1293px;
    left: 0;
    right: 0;
    z-index: 10;
    display: flex;
    align-items: center;
    gap: 96px;
    height: 130px;
    padding-left: 342px;
    overflow: hidden;
    background-color: rgba(15, 22, 40, 0.8);
    border-bottom: 2px solid var(--border);
    font-size: 32px;
}
.nav-link {
    color: rgba(248, 250, 252, 0.6);
    text-decoration: none;
}
.nav-link.active {
    color: var(--blue);
}
.nav-search {
    display: flex;
    margin-left: auto;
    margin-right: -21px;
    padding: 0;
    border: none;
    background: none;
}

.page {
    padding: 64px 99px 64px 59px;
}
.card {
    padding: 48px;
    border: 2px solid var(--border);
    border-radius: 16px;
    box-shadow: 0 20px 30px -6px rgba(0, 0, 0, 0.12);
}
.card-header {
    padding-bottom: 48px;
}
h1 {
    margin-bottom: 12px;
    font-family: Poppins, Inter, sans-serif;
    font-size: 57px;
    font-weight: 600;
    line-height: 72px;
}

.field {
    margin-bottom: 32px;
}
.field > label {
    display: block;
    margin-bottom: 16px;
    line-height: 48px;
}
.input {
    display: block;
    width: 100%;
    height: 80px;
    padding: 0 24px;
    background-color: transparent;
    border: 2px solid var(--border);
    border-radius: 12px;
    outline: none;
}
.input::placeholder {
    color: var(--muted);
    opacity: 1;
}
.input.selected {
    box-shadow: 0 0 0 4px var(--bg), 0 0 0 8px var(--blue);
}
.add-stop {
    display: flex;
    align-items: center;
    gap: 32px;
    height: 72px;
    padding: 0 24px;
    background: none;
    border: 2px solid var(--border);
    border-radius: 12px;
}

.map {
    position: relative;
    height: 640px;
    margin: 48px 0;
    overflow: hidden;
    border: 2px solid var(--border);
    border-radius: 12px;
    font-family: Roboto, sans-serif;
}
.map-canvas {
    display: block;
    width: 100%;
    height: 100%;
    stroke-linejoin: round;
}
.map-canvas path {
    vector-effect: non-scaling-stroke;
}
.road-casing {
    fill: none;
    stroke: #8496c1;
    stroke-width: 4px;
}
.road-fill {
    fill: none;
    stroke: #a8b6da;
    stroke-width: 2.2px;
}
.highways {
    fill: none;
    stroke: #a5b8de;
    stroke-width: 1.6px;
}
.streets {
    fill: none;
    stroke: #a9bcc9;
    stroke-width: 1px;
    opacity: 0.8;
}
.borders {
    fill: none;
    stroke: #5f5f66;
    stroke-width: 1.4px;
    stroke-dasharray: 5 4;
}
.places {
    fill: #333438;
    stroke: rgba(255, 255, 255, 0.85);
    stroke-width: 4px;
    paint-order: stroke;
    font-size: 24px;
}
.places .city {
    font-size: 29px;
    font-weight: 600;
}
.places .metro {
    font-size: 36px;
    font-weight: 600;
}
.dots {
    fill: #fff;
    stroke: #333;
    stroke-width: 2px;
}
.shield-red {
    fill: #d9635f;
}
.shield-blue {
    fill: #3a77c9;
}
.us-route {
    fill: #fff;
    stroke: #5c5c5c;
    stroke-width: 2px;
}
.route-numbers {
    fill: #fff;
    font-size: 19px;
    font-weight: 600;
    text-anchor: middle;
}
.route-numbers .us {
    fill: #444;
    font-weight: 400;
}
.map-fullscreen, .map-pan {
    position: absolute;
    right: 20px;
    display: flex;
    align-items: center;
    justify-content: center;
    width: 80px;
    height: 80px;
    padding: 0;
    background-color: #fff;
    border: none;
    border-radius: 4px;
    box-shadow: 0 2px 8px rgba(0, 0, 0, 0.25);
}
.map-fullscreen {
    top: 20px;
}
.map-fullscreen svg {
    width: 36px;
    fill: #666;
}
.map-pan {
    bottom: 48px;
    border-radius: 50%;
}
.map-pan svg {
    width: 46px;
    fill: none;
    stroke: #666;
    stroke-width: 5;
}
.google-logo {
    position: absolute;
    left: 20px;
    bottom: 8px;
    font-family: Lato, sans-serif;
    font-size: 38px;
    line-height: 44px;
}
.g-blue { color: #4285f4; }
.g-red { color: #ea4335; }
.g-yellow { color: #fbbc04; }
.g-green { color: #34a853; }
.map-credits {
    position: absolute;
    right: 0;
    bottom: 0;
    display: flex;
    gap: 2px;
    color: #000;
    font-size: 20px;
    line-height: 28px;
}
.map-credits > * {
    padding: 0 11px;
    border: none;
    background-color: rgba(245, 245, 245, 0.7);
    color: inherit;
    text-decoration: none;
}

.row {
    display: grid;
    grid-template-columns: 1fr 1fr;
    gap: 48px;
}
.row-numbers {
    margin-top: 16px;
}
.field-date label {
    display: block;
    margin-bottom: 16px;
    line-height: 28px;
}
.date-button {
    display: flex;
    align-items: center;
    justify-content: space-between;
    padding-right: 32px;
    color: var(--muted);
}
.date-button .icon {
    opacity: 0.6;
}
.time {
    padding-left: 30px;
}
.number {
    position: relative;
}
.number input {
    appearance: textfield;
}
.number input::-webkit-inner-spin-button {
    appearance: none;
}
.spinner {
    position: absolute;
    top: 22px;
    right: 26px;
    width: 36px;
    height: 36px;
    background-color: #2b2931;
    fill: none;
    stroke: #9794a3;
    stroke-width: 3;
}

.options {
    display: flex;
    flex-direction: column;
    gap: 32px;
    margin: 16px 0 0;
    padding: 0;
    border: none;
}
.options legend {
    padding: 0;
    margin-bottom: 32px;
    line-height: 48px;
}
.option {
    display: flex;
    align-items: center;
    gap: 24px;
    padding: 32px;
    border: 2px solid var(--border);
    border-radius: 12px;
}
.option label {
    display: block;
    margin-bottom: 4px;
    line-height: 36px;
}
.option input {
    appearance: none;
    width: 32px;
    height: 32px;
    margin: 0;
    border: 2px solid var(--blue);
    border-radius: 8px;
}

.optimizer {
    display: flex;
    align-items: center;
    gap: 16px;
    margin-top: 48px;
    padding: 48px 0;
    border-top: 2px solid var(--border);
    font-size: 36px;
    font-weight: 700;
    line-height: 56px;
}
.bolt {
    width: 40px;
    height: 40px;
    color: var(--blue);
}
.switch {
    appearance: none;
    width: 88px;
    height: 48px;
    margin: 0 0 0 auto;
    padding: 4px;
    background-color: var(--border);
    border-radius: 24px;
}
.switch::before {
    content: "";
    display: block;
    width: 40px;
    height: 40px;
    background-color: var(--bg);
    border-radius: 50%;
}
.submit {
    display: block;
    width: 100%;
    height: 88px;
    border: none;
    border-radius: 12px;
    background-color: var(--green);
    color: #fff;
    font-size: 36px;
    font-weight: 700;
}
```
